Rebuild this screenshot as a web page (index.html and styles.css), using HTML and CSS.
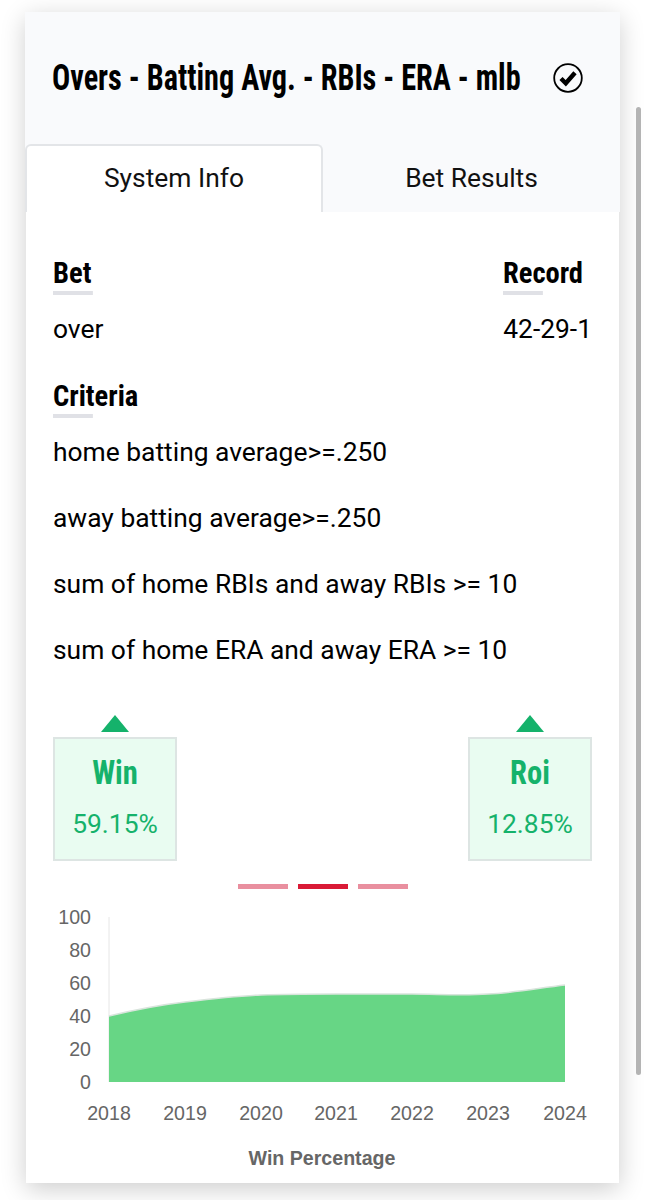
FILE: index.html
```html
<!DOCTYPE html>
<html lang="en">
<head>
<meta charset="utf-8">
<title>System</title>
<link rel="stylesheet" href="styles.css">
</head>
<body>
<div class="scrollbar"></div>
<main class="card">
  <header class="head">
    <div class="title-row">
      <h1 class="title">Overs - Batting Avg. - RBIs - ERA - mlb</h1>
      <svg class="check" viewBox="0 0 30 30" width="30" height="30">
        <circle cx="15" cy="15" r="13.8" fill="none" stroke="#000" stroke-width="1.8"/>
        <path d="M8 15.5l4.8 4.8L22 9.8" fill="none" stroke="#000" stroke-width="4.4"/>
      </svg>
    </div>
    <div class="tabs">
      <div class="tab active">System Info</div>
      <div class="tab">Bet Results</div>
    </div>
  </header>
  <section class="body">
    <div class="summary">
      <div>
        <h2 class="label">Bet</h2>
        <p class="value">over</p>
      </div>
      <div>
        <h2 class="label">Record</h2>
        <p class="value">42-29-1</p>
      </div>
    </div>
    <h2 class="label criteria-label">Criteria</h2>
    <ul class="criteria">
      <li>home batting average&gt;=.250</li>
      <li>away batting average&gt;=.250</li>
      <li>sum of home RBIs and away RBIs &gt;= 10</li>
      <li>sum of home ERA and away ERA &gt;= 10</li>
    </ul>
    <div class="stats">
      <div class="stat">
        <div class="arrow"></div>
        <div class="stat-box">
          <div class="stat-name">Win</div>
          <div class="stat-num">59.15%</div>
        </div>
      </div>
      <div class="stat">
        <div class="arrow"></div>
        <div class="stat-box">
          <div class="stat-name">Roi</div>
          <div class="stat-num">12.85%</div>
        </div>
      </div>
    </div>
    <div class="dots">
      <span class="dot"></span><span class="dot on"></span><span class="dot"></span>
    </div>
    <svg class="chart" viewBox="0 0 593 300" width="593" height="300">
      <line x1="83" y1="31" x2="83" y2="196" stroke="#e6e6e6" stroke-width="1"/>
      <path d="M83 130 C108 124 133 119 159 116 C184 113 209 110 235 109 C260 108 285 108 310 108 C335 108 361 108 386 108 C411 108 436 110 462 108 C487 107 513 102 539 99 L539 196 L83 196 Z" fill="#67d685"/>
      <path d="M83 130 C108 124 133 119 159 116 C184 113 209 110 235 109 C260 108 285 108 310 108 C335 108 361 108 386 108 C411 108 436 110 462 108 C487 107 513 102 539 99" fill="none" stroke="#d9e4dc" stroke-width="1.5"/>
      <g class="y-ticks">
        <text x="65" y="38">100</text>
        <text x="65" y="71">80</text>
        <text x="65" y="104">60</text>
        <text x="65" y="137">40</text>
        <text x="65" y="170">20</text>
        <text x="65" y="203">0</text>
      </g>
      <g class="x-ticks">
        <text x="83" y="234">2018</text>
        <text x="159" y="234">2019</text>
        <text x="235" y="234">2020</text>
        <text x="310" y="234">2021</text>
        <text x="386" y="234">2022</text>
        <text x="462" y="234">2023</text>
        <text x="539" y="234">2024</text>
      </g>
      <text class="chart-title" x="296" y="279">Win Percentage</text>
    </svg>
  </section>
</main>
</body>
</html>
```

FILE: styles.css
```css
* { box-sizing: border-box; }
html, body { margin: 0; padding: 0; }
body {
  background: #fff;
  height: 1200px;
  overflow: hidden;
  padding: 12px 26px 0;
  font-family: Roboto, sans-serif;
  color: #000;
}
.scrollbar {
  position: absolute;
  left: 636px;
  top: 107px;
  width: 5px;
  height: 968px;
  border-radius: 3px;
  background: #b4b4b4;
}
.card {
  width: 593px;
  height: 1171px;
  background: #fff;
  box-shadow: 0 6px 24px rgba(0, 0, 0, 0.2);
}
.head {
  height: 200px;
  margin: 0 -1px;
  background: #f9fafc;
  display: flex;
  flex-direction: column;
  justify-content: flex-end;
}
.title-row {
  display: flex;
  align-items: center;
  justify-content: space-between;
  padding: 0 37px 0 27px;
  height: 44px;
  margin-bottom: 44px;
}
.title {
  margin: 0;
  width: 468px;
  font: 700 36px/44px "Liberation Sans Narrow", "Roboto Condensed", Roboto, sans-serif;
  white-space: nowrap;
  transform: scaleX(0.84);
  transform-origin: left center;
}
.check { display: block; }
.tabs { display: flex; height: 68px; }
.tab {
  flex: 0 0 297px;
  padding-top: 16px;
  text-align: center;
  font-size: 26.4px;
  line-height: 36px;
  color: #111;
}
.tab.active {
  flex-basis: 298px;
  background: #fff;
  border: 2px solid #e3e5e8;
  border-bottom: 0;
  border-radius: 6px 6px 0 0;
  padding-top: 14px;
}
.body { padding: 0 27px; }
.summary {
  display: flex;
  justify-content: space-between;
  padding-top: 43px;
}
.label {
  display: inline-block;
  margin: 0;
  font: 700 30px/36px "Liberation Sans Narrow", "Roboto Condensed", Roboto, sans-serif;
  position: relative;
  transform: scaleX(0.95);
  transform-origin: left center;
}
.label::after {
  content: "";
  position: absolute;
  left: 0;
  width: 42px;
  bottom: -4px;
  height: 4px;
  background: #e0e1e6;
}
.value { margin: 20px 0 0; font-size: 26.4px; line-height: 36px; }
.criteria-label { margin-top: 31px; display: block; }
.criteria { list-style: none; margin: 20px 0 0; padding: 0; }
.criteria li { font-size: 26.4px; line-height: 36px; margin-bottom: 30px; }
.stats {
  display: flex;
  justify-content: space-between;
  margin-top: 47px;
}
.stat { width: 124px; display: flex; flex-direction: column; align-items: center; }
.arrow {
  width: 0;
  height: 0;
  border-left: 14px solid transparent;
  border-right: 14px solid transparent;
  border-bottom: 17px solid #15b26b;
  margin-bottom: 5px;
}
.stat-box {
  width: 124px;
  height: 124px;
  background: #e9fcf1;
  border: 2px solid #dde5e3;
  text-align: center;
  color: #15b26b;
  padding-top: 13px;
}
.stat-name {
  font: 700 34px/40px "Liberation Sans Narrow", "Roboto Condensed", Roboto, sans-serif;
  transform: scaleX(0.9);
}
.stat-num { font-size: 26.4px; line-height: 36px; margin-top: 14px; }
.dots { display: flex; justify-content: center; gap: 10px; margin-top: 23px; }
.dot { width: 50px; height: 5px; background: #e98f9f; }
.dot.on { background: #d91a36; }
.chart { display: block; margin: -3px 0 0 -27px; }
.chart text { font-family: "Liberation Sans", Arial, sans-serif; font-size: 19.6px; fill: #666; }
.y-ticks text { text-anchor: end; }
.x-ticks text { text-anchor: middle; }
.chart .chart-title { text-anchor: middle; font-weight: 700; }
```
